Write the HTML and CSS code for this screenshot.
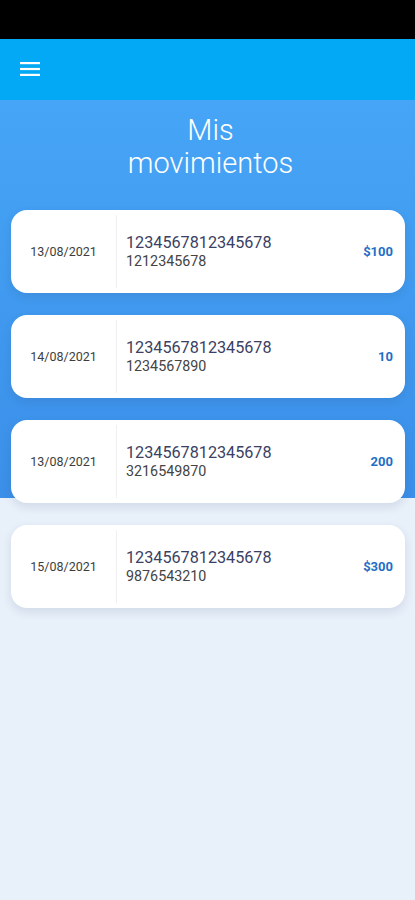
FILE: index.html
```html
<!DOCTYPE html>
<html lang="es">
<head>
  <meta charset="UTF-8" />
  <meta name="viewport" content="width=device-width, initial-scale=1.0" />
  <title>Mis movimientos</title>
  <link rel="stylesheet" href="styles.css">
</head>
<body>

  <div class="status-bar"></div>

  <header class="app-bar">
    <button class="menu-btn" aria-label="Menu">
      <svg width="20" height="14" viewBox="0 0 20 14">
        <rect x="0" y="0" width="20" height="2.2" fill="#fff" />
        <rect x="0" y="5.9" width="20" height="2.2" fill="#fff" />
        <rect x="0" y="11.8" width="20" height="2.2" fill="#fff" />
      </svg>
    </button>
  </header>

  <main class="content">
    <h1 class="title">Mis<br>movimientos</h1>

    <ul class="moves">
      <li class="move">
        <div class="move-date">13/08/2021</div>
        <div class="move-info">
          <div class="move-card">1234567812345678</div>
          <div class="move-ref">1212345678</div>
        </div>
        <div class="move-amount">$100</div>
      </li>
      <li class="move">
        <div class="move-date">14/08/2021</div>
        <div class="move-info">
          <div class="move-card">1234567812345678</div>
          <div class="move-ref">1234567890</div>
        </div>
        <div class="move-amount">10</div>
      </li>
      <li class="move">
        <div class="move-date">13/08/2021</div>
        <div class="move-info">
          <div class="move-card">1234567812345678</div>
          <div class="move-ref">3216549870</div>
        </div>
        <div class="move-amount">200</div>
      </li>
      <li class="move">
        <div class="move-date">15/08/2021</div>
        <div class="move-info">
          <div class="move-card">1234567812345678</div>
          <div class="move-ref">9876543210</div>
        </div>
        <div class="move-amount">$300</div>
      </li>
    </ul>
  </main>

</body>
</html>
```

FILE: styles.css
```css
html, body {
  height: 100%;
}

body {
  font-family: Roboto, 'Noto Sans', sans-serif;
  margin: 0;
  padding: 0;
  background-color: #e8f0fa;
  display: flex;
  flex-direction: column;
}

.status-bar {
  height: 39px;
  background-color: #000;
  flex-shrink: 0;
}

.app-bar {
  height: 61px;
  background-color: #03a9f4;
  display: flex;
  align-items: center;
  padding: 0 20px;
  flex-shrink: 0;
}

.menu-btn {
  background: none;
  border: 0;
  padding: 0;
  margin-top: -2px;
  display: flex;
}

.content {
  flex: 1;
  background: linear-gradient(#46a5f6, #3b8fe8 398px, #e8f0fa 398px);
  padding: 14px 10px 0 11px;
}

.title {
  margin: 0;
  padding-left: 5px;
  text-align: center;
  color: #fff;
  font-weight: 300;
  font-size: 29px;
  line-height: 33px;
}

.moves {
  list-style: none;
  margin: 30px 0 0;
  padding: 0;
  display: flex;
  flex-direction: column;
  gap: 22px;
}

.move {
  height: 83px;
  background-color: #fff;
  border-radius: 16px;
  box-shadow: 0 4px 10px rgba(40, 60, 100, 0.12);
  display: flex;
  align-items: center;
}

.move-date {
  width: 105px;
  align-self: stretch;
  display: flex;
  align-items: center;
  justify-content: center;
  border-right: 1px solid #f0f0f2;
  margin: 5px 0;
  font-size: 12.5px;
  color: #3d3d3d;
}

.move-info {
  flex: 1;
  padding-left: 9px;
}

.move-card {
  font-size: 16.2px;
  color: #3b3f63;
  line-height: 19px;
}

.move-ref {
  font-size: 14.3px;
  color: #444;
  line-height: 18px;
}

.move-amount {
  padding-right: 12px;
  font-size: 13px;
  font-weight: 700;
  color: #1f6fc5;
}
```
